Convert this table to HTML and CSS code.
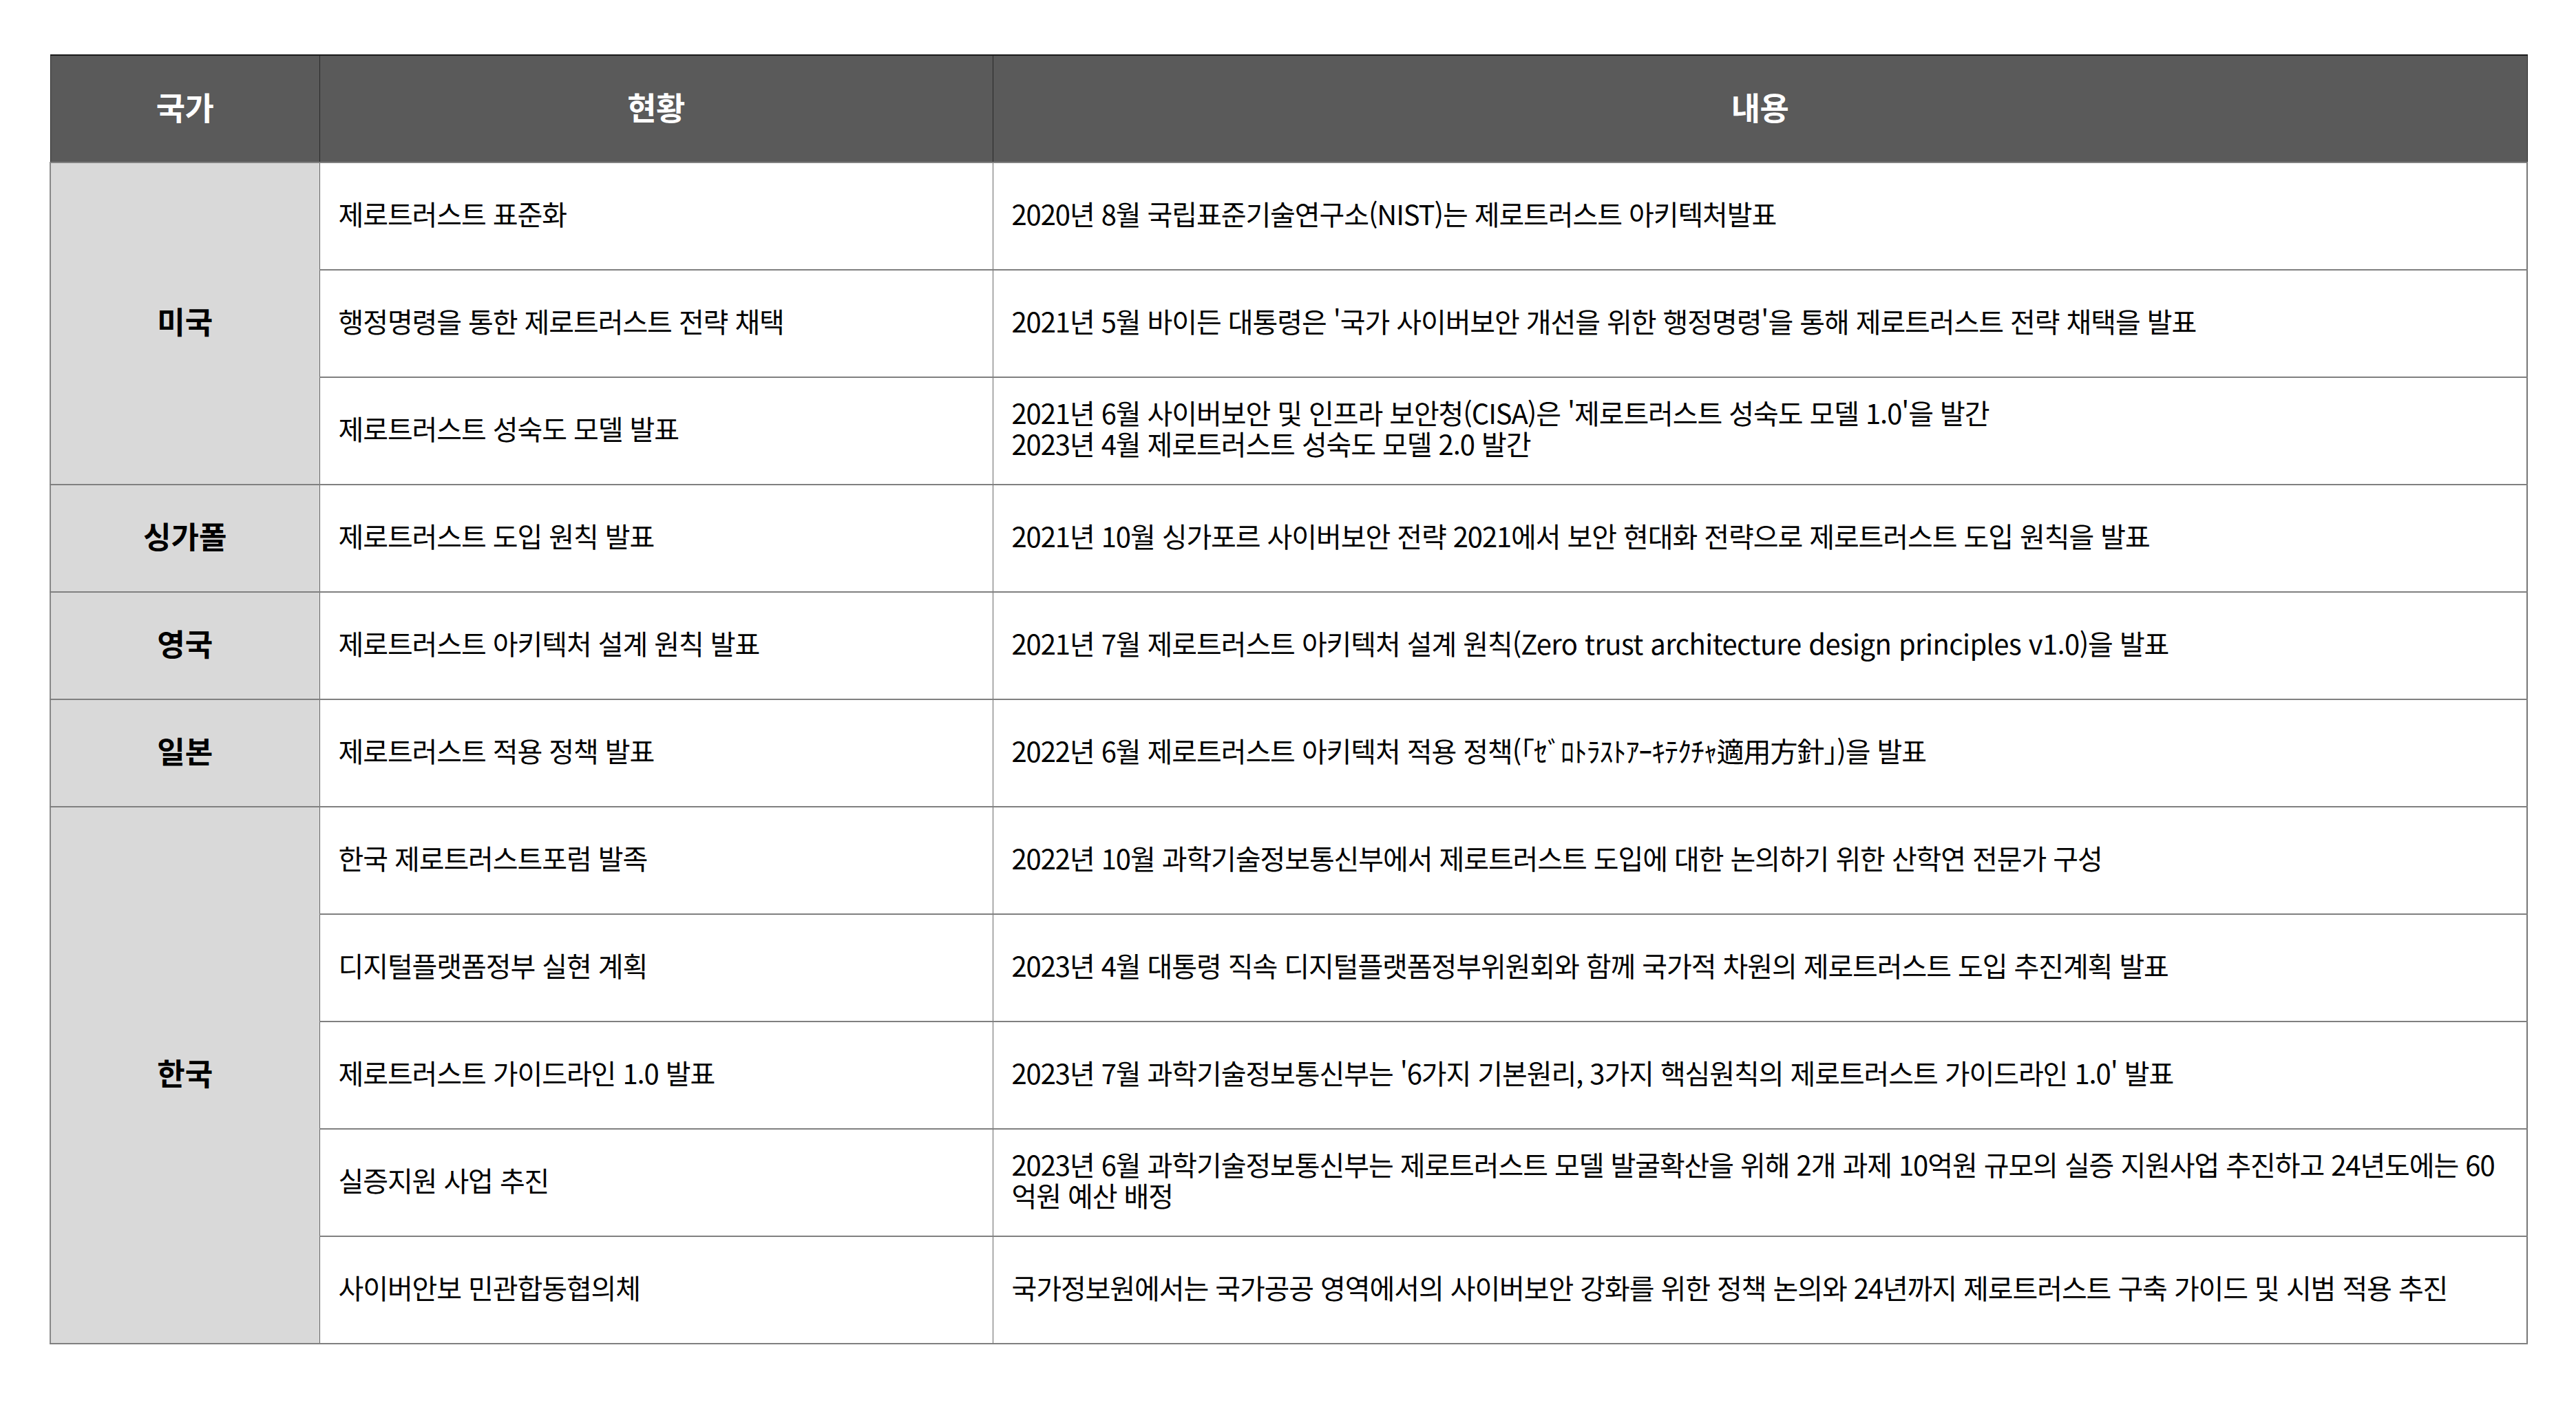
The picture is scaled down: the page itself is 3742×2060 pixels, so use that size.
FILE: index.html
```html
<!DOCTYPE html>
<html lang="ko">
<head>
<meta charset="utf-8">
<title>국가별 제로트러스트 현황</title>
<link rel="stylesheet" href="styles.css">
</head>
<body>
<div class="page">
<table class="zt-table">
  <colgroup>
    <col class="col-country">
    <col class="col-status">
    <col class="col-content">
  </colgroup>
  <thead>
    <tr class="head-row">
      <th>국가</th>
      <th>현황</th>
      <th>내용</th>
    </tr>
  </thead>
  <tbody>
    <tr>
      <td class="country" rowspan="3">미국</td>
      <td class="status">제로트러스트 표준화</td>
      <td class="content">2020년 8월 국립표준기술연구소(NIST)는 제로트러스트 아키텍처발표</td>
    </tr>
    <tr>
      <td class="status">행정명령을 통한 제로트러스트 전략 채택</td>
      <td class="content">2021년 5월 바이든 대통령은 '국가 사이버보안 개선을 위한 행정명령'을 통해 제로트러스트 전략 채택을 발표</td>
    </tr>
    <tr>
      <td class="status">제로트러스트 성숙도 모델 발표</td>
      <td class="content">2021년 6월 사이버보안 및 인프라 보안청(CISA)은 '제로트러스트 성숙도 모델 1.0'을 발간<br>2023년 4월 제로트러스트 성숙도 모델 2.0 발간</td>
    </tr>
    <tr>
      <td class="country">싱가폴</td>
      <td class="status">제로트러스트 도입 원칙 발표</td>
      <td class="content">2021년 10월 싱가포르 사이버보안 전략 2021에서 보안 현대화 전략으로 제로트러스트 도입 원칙을 발표</td>
    </tr>
    <tr>
      <td class="country">영국</td>
      <td class="status">제로트러스트 아키텍처 설계 원칙 발표</td>
      <td class="content">2021년 7월 제로트러스트 아키텍처 설계 원칙(<span class="latin">Zero trust architecture design principles v1.0</span>)을 발표</td>
    </tr>
    <tr>
      <td class="country">일본</td>
      <td class="status">제로트러스트 적용 정책 발표</td>
      <td class="content">2022년 6월 제로트러스트 아키텍처 적용 정책(｢ｾﾞﾛﾄﾗｽﾄｱｰｷﾃｸﾁｬ適用方針｣)을 발표</td>
    </tr>
    <tr>
      <td class="country" rowspan="5">한국</td>
      <td class="status">한국 제로트러스트포럼 발족</td>
      <td class="content">2022년 10월 과학기술정보통신부에서 제로트러스트 도입에 대한 논의하기 위한 산학연 전문가 구성</td>
    </tr>
    <tr>
      <td class="status">디지털플랫폼정부 실현 계획</td>
      <td class="content">2023년 4월 대통령 직속 디지털플랫폼정부위원회와 함께 국가적 차원의 제로트러스트 도입 추진계획 발표</td>
    </tr>
    <tr>
      <td class="status">제로트러스트 가이드라인 1.0 발표</td>
      <td class="content">2023년 7월 과학기술정보통신부는 '6가지 기본원리, 3가지 핵심원칙의 제로트러스트 가이드라인 1.0' 발표</td>
    </tr>
    <tr>
      <td class="status">실증지원 사업 추진</td>
      <td class="content">2023년 6월 과학기술정보통신부는 제로트러스트 모델 발굴확산을 위해 2개 과제 10억원 규모의 실증 지원사업 추진하고 24년도에는 60<br>억원 예산 배정</td>
    </tr>
    <tr>
      <td class="status">사이버안보 민관합동협의체</td>
      <td class="content">국가정보원에서는 국가공공 영역에서의 사이버보안 강화를 위한 정책 논의와 24년까지 제로트러스트 구축 가이드 및 시범 적용 추진</td>
    </tr>
  </tbody>
</table>
</div>
</body>
</html>
```

FILE: styles.css
```css
html, body {
  margin: 0;
  padding: 0;
  background: #ffffff;
}

.page {
  padding: 79px 72px 0 72px;
  font-family: "Noto Sans CJK KR", "Noto Sans", sans-serif;
  color: #000000;
}

.zt-table {
  width: 3598px;
  border-collapse: collapse;
  table-layout: fixed;
}

.col-country { width: 391px; }
.col-status { width: 978px; }
.col-content { width: 2229px; }

.head-row {
  height: 156px;
}

.head-row th {
  height: 146px;
  background: #5a5a5a;
  color: #ffffff;
  font-size: 46px;
  font-weight: 700;
  letter-spacing: -0.5px;
  text-align: center;
  vertical-align: middle;
  border: 1px solid #2a2a2a;
  border-top: 2px solid #1a1a1a;
  padding: 0 0 8px 0;
}

.zt-table tbody tr {
  height: 156px;
}

.zt-table td {
  border-top: 2px solid #808080;
  border-bottom: 2px solid #808080;
  border-left: 1px solid #666666;
  border-right: 1px solid #666666;
  vertical-align: middle;
  padding: 0 0 8px 0;
}

.country {
  background: #d9d9d9;
  text-align: center;
  font-size: 44px;
  font-weight: 700;
  letter-spacing: 0;
}

.zt-table td.status,
.zt-table td.content {
  font-size: 40px;
  font-weight: 400;
  letter-spacing: -1.1px;
  line-height: 45px;
  padding: 0 10px 8px 27px;
}

.latin {
  letter-spacing: -0.6px;
}

.zt-table td:last-child {
  border-right: 2px solid #777777;
}

.zt-table td.country {
  border-left: 2px solid #888888;
}
```
